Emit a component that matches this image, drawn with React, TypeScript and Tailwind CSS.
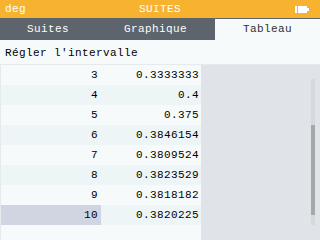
import React from "react";

const rows: [string, string][] = [
  ["3", "0.3333333"],
  ["4", "0.4"],
  ["5", "0.375"],
  ["6", "0.3846154"],
  ["7", "0.3809524"],
  ["8", "0.3823529"],
  ["9", "0.3818182"],
  ["10", "0.3820225"],
];

export default function App() {
  const mono = { fontFamily: '"Liberation Mono", "DejaVu Sans Mono", monospace' };
  return (
    <div
      className="w-[320px] h-[240px] overflow-hidden bg-[#f7fafa] flex flex-col text-[11px] tracking-[0.4px] leading-none"
      style={mono}
    >
      {/* Header */}
      <div className="h-[18px] bg-[#f7b32f] flex items-center px-[5px] text-white relative">
        <span>deg</span>
        <span className="absolute left-0 right-0 text-center">SUITES</span>
        <div className="ml-auto mr-[6px] flex items-center">
          <div className="w-[12px] h-[7px] bg-white flex">
            <div className="w-[2px]" />
            <div className="w-[1px] bg-[#f7b32f]" />
          </div>
          <div className="w-[2px] h-[3px] bg-white" />
        </div>
      </div>
      {/* Tabs */}
      <div className="h-[22px] bg-[#5d646b] flex text-white">
        <div className="w-[96px] flex items-center justify-center">Suites</div>
        <div className="w-[119px] flex items-center justify-center">Graphique</div>
        <div className="flex-1 flex items-center justify-center bg-[#f7fafa] text-[#303030] border-t border-[#5d646b]">
          Tableau
        </div>
      </div>
      {/* Title */}
      <div className="h-[25px] flex items-center px-[5px] pt-[3px] text-black border-b border-[#e6eaec]">
        Régler l'intervalle
      </div>
      {/* Content */}
      <div className="flex-1 flex">
        <div className="w-[201px] flex flex-col border-l border-[#e6eaec]">
          {rows.map(([n, v], i) => {
            const even = i % 2 === 1;
            const sel = n === "10";
            return (
              <div key={n} className={`h-[20px] flex text-black ${even ? "bg-[#eef5f7]" : "bg-[#f7fafa]"}`}>
                <div className={`w-[100px] flex items-center justify-end pr-[3px] ${sel ? "bg-[#d1d4e1]" : ""}`}>
                  {n}
                </div>
                <div className="flex-1 flex items-center justify-end pr-[2px]">{v}</div>
              </div>
            );
          })}
        </div>
        <div className="flex-1 bg-[#e0e3e8] flex justify-end pr-[5px] pt-[14px]">
          <div className="w-[4px] h-[146px] bg-[#d5d8dc] flex flex-col">
            <div className="h-[46px]" />
            <div className="h-[90px] bg-[#a4a8a6]" />
          </div>
        </div>
      </div>
    </div>
  );
}
